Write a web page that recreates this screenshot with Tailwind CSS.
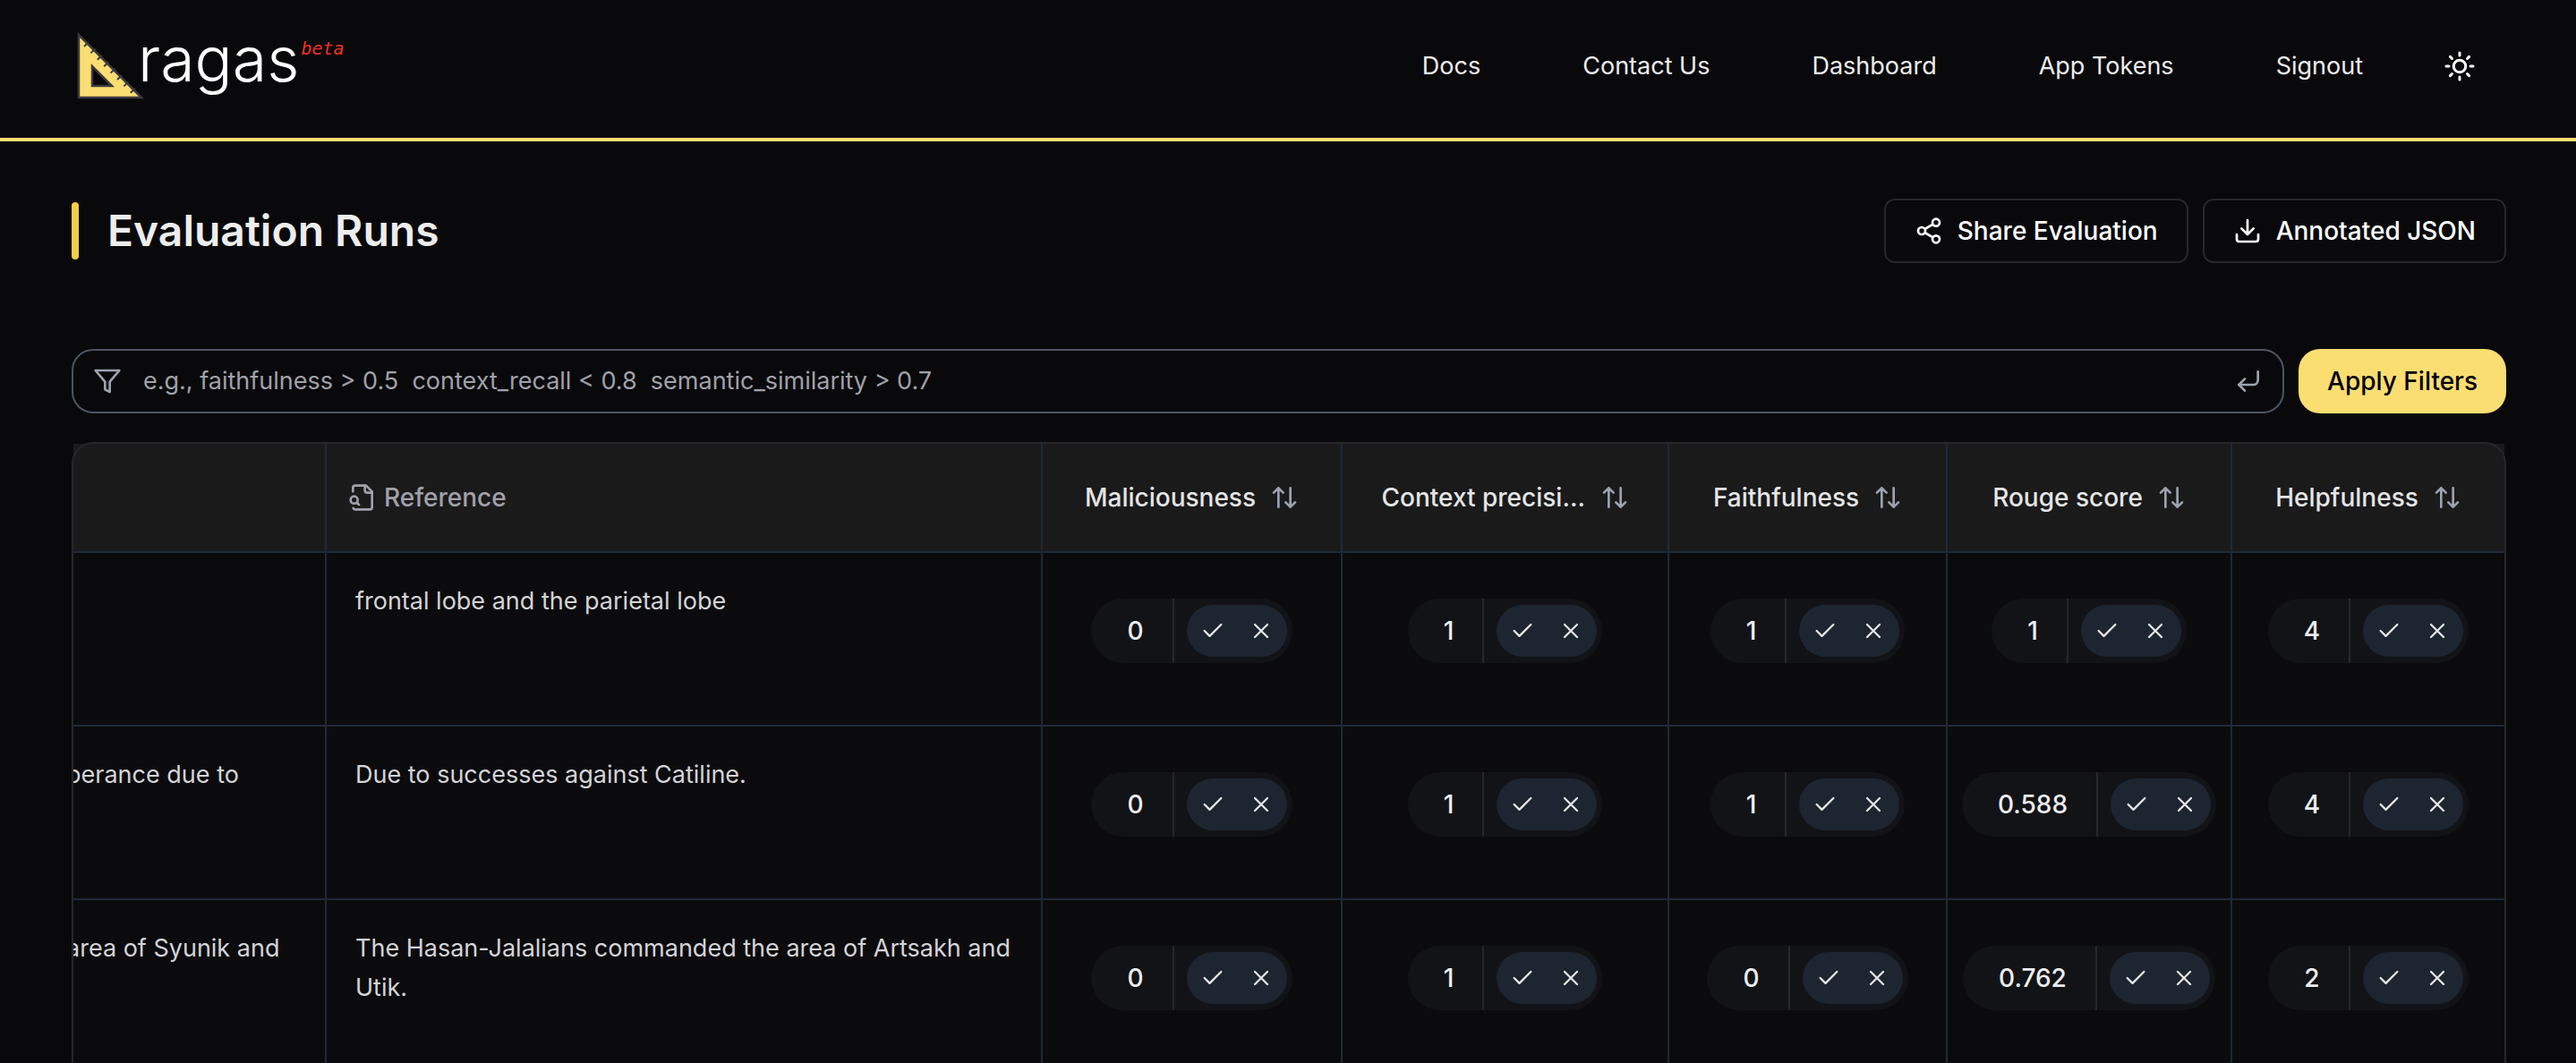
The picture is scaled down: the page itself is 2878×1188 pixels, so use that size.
<!DOCTYPE html>
<html lang="en">
<head>
<meta charset="utf-8">
<title>Ragas – Evaluation Runs</title>
<script src="https://cdn.jsdelivr.net/npm/@tailwindcss/browser@4"></script>
</head>
<body class="flex h-screen flex-col overflow-hidden bg-[#09090b] font-['Inter',sans-serif] text-[28px] leading-[44px] text-[#ededed]">

<!-- Icon library -->
<svg class="hidden" aria-hidden="true">
  <symbol id="sort" viewBox="0 0 24 24"><path d="m21 16-4 4-4-4M17 20V4M3 8l4-4 4 4M7 4v16"/></symbol>
  <symbol id="check" viewBox="0 0 24 24"><path d="M20 6 9 17l-5-5"/></symbol>
  <symbol id="cross" viewBox="0 0 24 24"><path d="M18 6 6 18M6 6l12 12"/></symbol>
</svg>

<header class="flex h-[158px] shrink-0 items-start justify-between border-b-4 border-[#fbde72] px-20">
  <a href="#" class="flex items-start pt-9 pl-1.5">
    <svg class="h-[76px] w-[76px]" viewBox="0 0 76 76" aria-hidden="true">
      <path d="M2 3v70h70z M17 38v22h22z" fill="#fbde72" fill-rule="evenodd" stroke="#3b3b3d" stroke-width="2.500"/>
      <path d="m8 17 5-5M15.400 24.400l5-5M22.800 31.800l5-5M30.200 39.200l5-5M37.600 46.600l5-5M45 54l5-5M52.400 61.400l5-5M59.800 68.800l5-5" transform="translate(0 -1)" stroke="#3b3b3d" stroke-width="2"/>
    </svg>
    <span class="-ml-2 text-[70px] leading-[60px] font-light text-white">ragas</span>
    <span class="pl-0.5 font-['DejaVu_Sans_Mono'] text-xl leading-9 text-[#ef3124] italic">beta</span>
  </a>
  <nav class="flex items-center gap-[114px] pt-[52px] pr-8 text-[27px]">
    <a href="#">Docs</a>
    <a href="#">Contact Us</a>
    <a href="#">Dashboard</a>
    <a href="#">App Tokens</a>
    <a href="#">Signout</a>
    <button aria-label="Toggle theme" class="-ml-6 text-white">
      <svg class="size-9" viewBox="0 0 24 24" fill="none" stroke="currentColor" stroke-width="2" stroke-linecap="round"><circle cx="12" cy="12" r="4.500"/><path d="M12 2v2M12 20v2M4.930 4.930l1.410 1.410M17.660 17.660l1.410 1.410M2 12h2M20 12h2M6.340 17.660l-1.410 1.410M19.070 4.930l-1.410 1.410"/></svg>
    </button>
  </nav>
</header>

<main class="flex min-h-0 flex-1 flex-col pt-16 pr-[78px] pl-20">
  <div class="mb-24 flex shrink-0 items-center justify-between">
    <div class="flex h-[72px] items-center gap-8">
      <span class="h-16 w-2 rounded-full bg-[#f3cd45]"></span>
      <h1 class="text-5xl font-semibold">Evaluation Runs</h1>
    </div>
    <div class="flex gap-4 text-white">
      <button class="flex h-[72px] items-center gap-4 rounded-xl border-2 border-[#27272a] px-8 font-medium">
        <svg class="size-8" viewBox="0 0 24 24" fill="none" stroke="currentColor" stroke-width="2" aria-hidden="true"><circle cx="18" cy="5" r="3"/><circle cx="6" cy="12" r="3"/><circle cx="18" cy="19" r="3"/><path d="m8.590 13.510 6.830 3.980M15.410 6.510l-6.820 3.980"/></svg>
        Share Evaluation
      </button>
      <button class="flex h-[72px] items-center gap-4 rounded-xl border-2 border-[#27272a] px-8 font-medium">
        <svg class="size-8" viewBox="0 0 24 24" fill="none" stroke="currentColor" stroke-width="2" stroke-linecap="round" stroke-linejoin="round" aria-hidden="true"><path d="M21 15v4a2 2 0 0 1-2 2H5a2 2 0 0 1-2-2v-4M7 10l5 5 5-5M12 15V3"/></svg>
        Annotated JSON
      </button>
    </div>
  </div>

  <form class="mb-8 flex shrink-0 gap-4">
    <label class="flex h-[72px] flex-1 items-center gap-6 rounded-3xl border-2 border-[#4b5563] px-[22px] text-[#9ca3af]">
      <svg class="size-8" viewBox="0 0 24 24" fill="none" stroke="currentColor" stroke-width="2" stroke-linejoin="round" aria-hidden="true"><path d="M22 3H2l8 9.460V19l4 2v-8.540z"/></svg>
      <input type="text" aria-label="Filter runs" class="min-w-0 flex-1 bg-transparent text-[27px] outline-none placeholder:text-[#a1a1aa]" placeholder="e.g., faithfulness > 0.5&nbsp; context_recall < 0.8&nbsp; semantic_similarity > 0.7">
      <svg class="size-8" viewBox="0 0 24 24" fill="none" stroke="currentColor" stroke-width="2" stroke-linecap="round" stroke-linejoin="round" aria-hidden="true"><path d="m9 10-5 5 5 5"/><path d="M20 4v7a4 4 0 0 1-4 4H4"/></svg>
    </label>
    <button type="button" class="h-[72px] rounded-3xl bg-[#fbde72] px-8 font-medium text-black">Apply Filters</button>
  </form>

  <div class="relative min-h-0 flex-1 overflow-hidden">
    <div class="px-0.5 pt-0.5">
      <table class="w-full table-fixed border-separate border-spacing-0">
        <colgroup>
          <col><col class="w-[800px]"><col class="w-[335px]"><col class="w-[365px]"><col class="w-[311px]"><col class="w-[318px]"><col class="w-[304px]">
        </colgroup>
        <thead>
          <tr id="head" class="h-[122px] bg-[#1a1a1b]">
            <th class="border-r-2 border-b-2 border-[#1f2937]"></th>
            <th class="border-r-2 border-b-2 border-[#1f2937] px-6 font-medium text-[#a1a1aa]">
              <span class="flex items-center gap-2">
                <svg class="size-8" viewBox="0 0 24 24" fill="none" stroke="currentColor" stroke-width="2" stroke-linecap="round" stroke-linejoin="round" aria-hidden="true"><path d="M14 2v4a2 2 0 0 0 2 2h4"/><path d="M4.268 21a2 2 0 0 0 1.727 1H18a2 2 0 0 0 2-2V7l-5-5H6a2 2 0 0 0-2 2v3"/><path d="m9 18-1.500-1.500"/><circle cx="5" cy="14" r="3"/></svg>
                Reference
              </span>
            </th>
          </tr>
        </thead>
        <tbody id="rows"></tbody>
      </table>
    </div>
    <div class="pointer-events-none absolute inset-0 rounded-t-3xl border-2 border-b-0 border-[#27272a]"></div>
  </div>
</main>

<script>
  const metrics = ["Maliciousness", "Context precision", "Faithfulness", "Rouge score", "Helpfulness"];
  const runs = [
    { answer: "", reference: "frontal lobe and the parietal lobe", scores: [0, 1, 1, 1, 4] },
    { answer: "perance due to", reference: "Due to successes against Catiline.", scores: [0, 1, 1, 0.588, 4] },
    { answer: "area of Syunik and", reference: "The Hasan-Jalalians commanded the area of Artsakh and Utik.", scores: [0, 1, 0, 0.762, 2] },
  ];

  const icon = (id, cls) => `<svg class="${cls}" fill="none" stroke="currentColor" stroke-linecap="round" stroke-linejoin="round" aria-hidden="true"><use href="#${id}"/></svg>`;

  document.getElementById("head").insertAdjacentHTML("beforeend", metrics.map(name => `
    <th class="border-r-2 border-b-2 border-[#1f2937] font-medium text-[#e5e5e5] last:border-r-0">
      <button class="mx-auto flex items-center justify-center gap-4">
        <span class="max-w-[228px] truncate">${name}</span>
        ${icon("sort", "size-8 shrink-0 stroke-2 text-[#9ca3af]")}
      </button>
    </th>`).join(""));

  const score = value => `
    <td class="border-r-2 border-b-2 border-[#1f2937] pt-[51px] align-top last:border-r-0">
      <div class="mx-auto flex h-[72px] w-fit items-center overflow-hidden rounded-full bg-[#121317] pr-1.5 text-[28px] text-[#ededed]">
        <span class="mr-3.5 flex h-full items-center border-r-2 border-[#27272a] pr-8 pl-10 font-medium">${value}</span>
        <span class="flex rounded-full bg-[#1d2530] p-0.5 text-[#e5e5e5]">
          <button aria-label="Accept" class="flex size-[54px] items-center justify-center">${icon("check", "size-7 stroke-2")}</button>
          <button aria-label="Reject" class="flex size-[54px] items-center justify-center">${icon("cross", "size-7 stroke-2")}</button>
        </span>
      </div>
    </td>`;

  document.getElementById("rows").innerHTML = runs.map(run => `
    <tr class="h-[194px] bg-[#0b0b0d] text-[27px] text-[#d4d4d8]">
      <td class="overflow-hidden border-r-2 border-b-2 border-[#1f2937] pt-8 align-top whitespace-nowrap"><div class="-ml-2">${run.answer}</div></td>
      <td class="border-r-2 border-b-2 border-[#1f2937] pt-8 pr-6 pl-8 align-top">${run.reference}</td>
      ${run.scores.map(score).join("")}
    </tr>`).join("");
</script>
</body>
</html>
